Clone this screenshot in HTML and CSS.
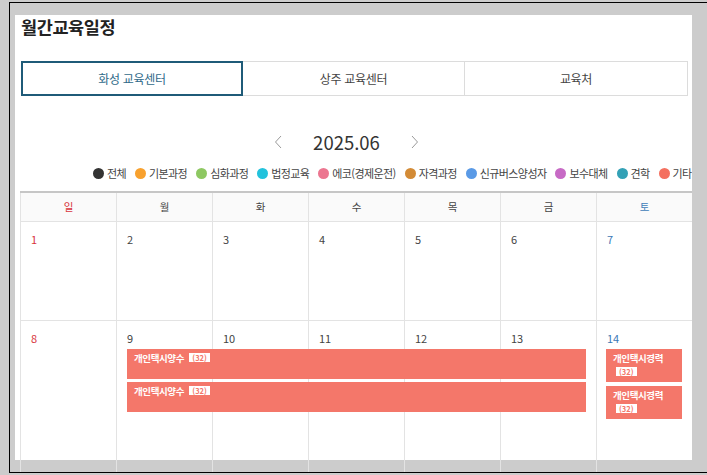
FILE: index.html
```html
<!DOCTYPE html>
<html lang="ko">
<head>
<meta charset="utf-8">
<title>월간교육일정</title>
<link rel="stylesheet" href="styles.css">
</head>
<body>
<div class="frame">
  <div class="panel">
    <h1 class="title">월간교육일정</h1>
    <div class="tabs">
      <div class="tab active">화성 교육센터</div>
      <div class="tab">상주 교육센터</div>
      <div class="tab">교육처</div>
    </div>
    <div class="nav">
      <svg class="arrow" width="8" height="14" viewBox="0 0 8 14"><path d="M7 1 L1.5 7 L7 13" fill="none" stroke="#9a9a9a" stroke-width="1"/></svg>
      <span class="month">2025.06</span>
      <svg class="arrow" width="8" height="14" viewBox="0 0 8 14"><path d="M1 1 L6.5 7 L1 13" fill="none" stroke="#9a9a9a" stroke-width="1"/></svg>
    </div>
    <div class="legend">
      <span class="item"><i class="dot c-all"></i>전체</span>
      <span class="item"><i class="dot c-basic"></i>기본과정</span>
      <span class="item"><i class="dot c-adv"></i>심화과정</span>
      <span class="item"><i class="dot c-law"></i>법정교육</span>
      <span class="item"><i class="dot c-eco"></i>에코(경제운전)</span>
      <span class="item"><i class="dot c-cert"></i>자격과정</span>
      <span class="item"><i class="dot c-bus"></i>신규버스양성자</span>
      <span class="item"><i class="dot c-sub"></i>보수대체</span>
      <span class="item"><i class="dot c-tour"></i>견학</span>
      <span class="item"><i class="dot c-etc"></i>기타</span>
    </div>
    <div class="calendar">
      <div class="head">
        <div class="hd sun">일</div>
        <div class="hd">월</div>
        <div class="hd">화</div>
        <div class="hd">수</div>
        <div class="hd">목</div>
        <div class="hd">금</div>
        <div class="hd sat">토</div>
      </div>
      <div class="week w1">
        <div class="cell sun">1</div>
        <div class="cell">2</div>
        <div class="cell">3</div>
        <div class="cell">4</div>
        <div class="cell">5</div>
        <div class="cell">6</div>
        <div class="cell sat">7</div>
      </div>
      <div class="week w2">
        <div class="cell sun">8</div>
        <div class="cell">9</div>
        <div class="cell">10</div>
        <div class="cell">11</div>
        <div class="cell">12</div>
        <div class="cell">13</div>
        <div class="cell sat">14</div>
        <div class="stack span-mon-fri">
          <div class="ev bar">개인택시양수 <span class="badge">(32)</span></div>
          <div class="ev bar">개인택시양수 <span class="badge">(32)</span></div>
        </div>
        <div class="stack stack-sat span-sat">
          <div class="ev">개인택시경력 <span class="badge">(32)</span></div>
          <div class="ev">개인택시경력 <span class="badge">(32)</span></div>
        </div>
      </div>
    </div>
  </div>
</div>
</body>
</html>
```

FILE: styles.css
```css
html, body {
  margin: 0;
  padding: 0;
}
body {
  background: #cccccc;
  overflow: hidden;
  height: 475px;
  font-family: "Noto Sans CJK KR", "Noto Sans", sans-serif;
  color: #333;
}
.frame {
  box-sizing: border-box;
  margin: 2px 0 0 9px;
  width: 698px;
  height: 471px;
  border: 1px solid #000;
  border-right: none;
  padding: 12px 0 0 5px;
  overflow: hidden;
}
.panel {
  box-sizing: border-box;
  width: 677px;
  height: 445px;
  background: #fff;
  padding: 0 0 0 5px;
}
.title {
  margin: 0 0 0 1px;
  font-size: 17.5px;
  line-height: 24px;
  font-weight: 700;
  letter-spacing: -0.4px;
  color: #222;
}
.tabs {
  margin: 22px 0 0 1px;
  width: 667px;
  height: 35px;
  display: grid;
  grid-template-columns: 222px 222px 223px;
}
.tab {
  box-sizing: border-box;
  border: 1px solid #dcdcdc;
  border-left: none;
  display: flex;
  align-items: center;
  justify-content: center;
  font-size: 12px;
  letter-spacing: -0.3px;
  color: #444;
}
.tab.active {
  border: 2px solid #1f5b78;
  color: #2f6a89;
}
.nav {
  margin-top: 34px;
  height: 24px;
  padding-right: 19px;
  display: flex;
  align-items: center;
  justify-content: center;
  gap: 31px;
}
.arrow {
  display: block;
}
.month {
  font-size: 18.5px;
  line-height: 24px;
  color: #333;
}
.legend {
  margin-top: 11px;
  height: 16px;
  width: 672px;
  overflow: hidden;
  display: flex;
  align-items: center;
  gap: 9px;
  padding-left: 73px;
  box-sizing: border-box;
  white-space: nowrap;
}
.item {
  display: flex;
  align-items: center;
  gap: 3px;
  flex: none;
  font-size: 11px;
  letter-spacing: -0.6px;
  color: #444;
  line-height: 16px;
}
.dot {
  width: 11px;
  height: 11px;
  border-radius: 50%;
  flex: none;
}
.c-all { background: #333333; }
.c-basic { background: #f8a12e; }
.c-adv { background: #8ec862; }
.c-law { background: #22c2dc; }
.c-eco { background: #ec7690; }
.c-cert { background: #d38b36; }
.c-bus { background: #5a9ae6; }
.c-sub { background: #c76ac5; }
.c-tour { background: #33a1b6; }
.c-etc { background: #f4705f; }

.calendar {
  margin-top: 10px;
  width: 672px;
}
.head {
  box-sizing: border-box;
  height: 31px;
  display: grid;
  grid-template-columns: repeat(7, 96px);
  border-top: 2px solid #c6c6c6;
  border-bottom: 1px solid #e3e3e3;
  background: #fafafa;
}
.hd {
  border-left: 1px solid #e3e3e3;
  font-size: 10.5px;
  line-height: 28px;
  text-align: center;
  color: #444;
}
.hd.sun { color: #d8343c; }
.hd.sat { color: #3f7cb8; }

.week {
  box-sizing: border-box;
  display: grid;
  grid-template-columns: repeat(7, 96px);
  grid-template-rows: 28px auto 1fr;
}
.w1 { height: 99px; }
.w2 { height: 160px; }
.cell {
  box-sizing: border-box;
  grid-row: 1 / -1;
  border-left: 1px solid #e3e3e3;
  border-bottom: 1px solid #e3e3e3;
  padding: 10px 0 0 10px;
  font-size: 11px;
  line-height: 14px;
  color: #444;
}
.cell:nth-child(1) { grid-column: 1; }
.cell:nth-child(2) { grid-column: 2; }
.cell:nth-child(3) { grid-column: 3; }
.cell:nth-child(4) { grid-column: 4; }
.cell:nth-child(5) { grid-column: 5; }
.cell:nth-child(6) { grid-column: 6; }
.cell:nth-child(7) { grid-column: 7; }
.cell.sun { color: #d8343c; }
.cell.sat { color: #3a78b6; }

.stack {
  grid-row: 2;
  display: flex;
  flex-direction: column;
  gap: 3px;
}
.span-mon-fri {
  grid-column: 2 / 7;
  margin: 0 10px 0 11px;
}
.span-sat {
  grid-column: 7;
  margin: 0 10px;
}
.stack-sat { gap: 4px; }
.ev {
  box-sizing: border-box;
  background: #f4776a;
  color: #fff;
  font-size: 9.5px;
  font-weight: 700;
  letter-spacing: -0.4px;
  line-height: 14px;
  padding: 2px 7px 3px;
}
.ev.bar {
  height: 30px;
}
.badge {
  display: inline-block;
  margin-left: 3px;
  background: #fff;
  color: #f4776a;
  font-size: 7.5px;
  line-height: 9px;
  padding: 0 3px;
  letter-spacing: 0;
  vertical-align: 1px;
}
```
